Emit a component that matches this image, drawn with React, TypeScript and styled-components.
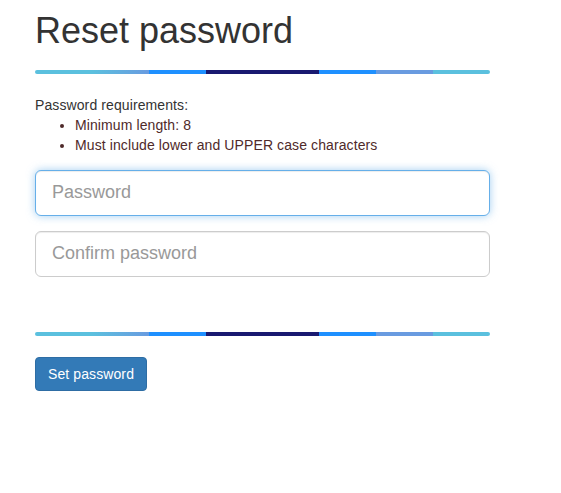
import React from "react";
import styled, { createGlobalStyle, css } from "styled-components";

const Global = createGlobalStyle`
  html, body { margin: 0; padding: 0; background: #fff; }
  body {
    font-family: "Liberation Sans", Arial, Helvetica, sans-serif;
    font-size: 14px;
    line-height: 20px;
    color: #333;
  }
  * { box-sizing: border-box; }
`;

const Page = styled.div`
  width: 455px;
  margin-left: 35px;
  padding-top: 11px;
  display: flex;
  flex-direction: column;
`;

const Title = styled.h1`
  margin: 0;
  font-size: 36px;
  font-weight: 500;
  line-height: 39.6px;
  color: #333;
`;

const StripeBar = styled.div<{ $top: number; $bottom: number }>`
  height: 4px;
  border-radius: 2px;
  margin-top: ${(p) => p.$top}px;
  margin-bottom: ${(p) => p.$bottom}px;
  background: linear-gradient(
    to right,
    #5bc0de 0%,
    #5bc0de 12.5%,
    #699be0 25%,
    #1e90ff 25%,
    #1e90ff 37.5%,
    #191970 37.5%,
    #191970 62.5%,
    #1e90ff 62.5%,
    #1e90ff 75%,
    #699be0 75%,
    #699be0 87.5%,
    #5bc0de 87.5%,
    #5bc0de 100%
  );
`;

const Requirements = styled.div`
  font-size: 14px;
  line-height: 20px;
  letter-spacing: 0.1px;
  color: #333;
`;

const RuleList = styled.ul`
  margin: 0 0 15px 0;
  padding-left: 40px;
`;

const Rule = styled.li`
  color: #4f2a2a;
`;

const FieldGroup = styled.div`
  margin-bottom: 15px;
`;

const Input = styled.input<{ $focused?: boolean }>`
  display: block;
  width: 100%;
  height: 46px;
  padding: 10px 16px;
  font-family: "Liberation Sans", Arial, Helvetica, sans-serif;
  font-size: 18px;
  line-height: 1.3333;
  color: #555;
  background: #fff;
  border: 1px solid #ccc;
  border-radius: 6px;
  box-shadow: inset 0 1px 1px rgba(0, 0, 0, 0.075);
  outline: none;
  &::placeholder { color: #999; }
  ${(p) =>
    p.$focused &&
    css`
      border-color: #66afe9;
      box-shadow: inset 0 1px 1px rgba(0, 0, 0, 0.075),
        0 0 8px rgba(102, 175, 233, 0.6);
    `}
`;

const Actions = styled.div`
  display: flex;
`;

const PrimaryButton = styled.button`
  font-family: "Liberation Sans", Arial, Helvetica, sans-serif;
  font-size: 14px;
  line-height: 20px;
  letter-spacing: 0.1px;
  padding: 6px 12px;
  color: #fff;
  background: #337ab7;
  border: 1px solid #2e6da4;
  border-radius: 4px;
  cursor: pointer;
`;

export default function App() {
  return (
    <>
      <Global />
      <Page>
        <Title>Reset password</Title>
        <StripeBar $top={19} $bottom={21} />
        <Requirements>
          Password requirements:
          <RuleList>
            <Rule>Minimum length: 8</Rule>
            <Rule>Must include lower and UPPER case characters</Rule>
          </RuleList>
        </Requirements>
        <FieldGroup>
          <Input type="password" placeholder="Password" $focused />
        </FieldGroup>
        <FieldGroup>
          <Input type="password" placeholder="Confirm password" />
        </FieldGroup>
        <StripeBar $top={40} $bottom={21} />
        <Actions>
          <PrimaryButton type="button">Set password</PrimaryButton>
        </Actions>
      </Page>
    </>
  );
}
